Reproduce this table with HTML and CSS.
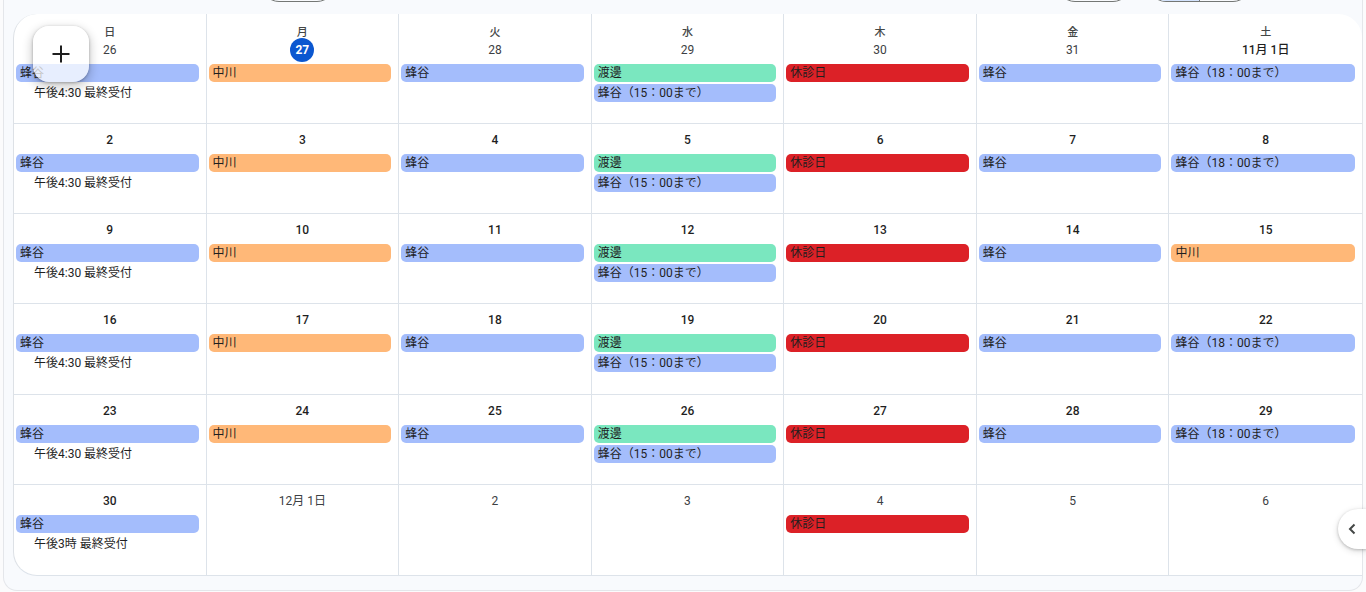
FILE: index.html
```html
<!DOCTYPE html>
<html lang="ja">
<head>
<meta charset="utf-8">
<title>カレンダー</title>
<link rel="stylesheet" href="styles.css">
</head>
<body>
<div class="frame">
  <div class="toolbar">
    <div class="tbtn tbtn-a"></div>
    <div class="spacer"></div>
    <div class="tbtn tbtn-b"></div>
    <div class="seg"><div class="seg-on"></div><div class="seg-off"></div></div>
  </div>
  <div class="card">
    <div class="grid">
      <!-- row 0 -->
      <div class="cell first"><div class="wd">日</div><div class="date other"><span class="num">26</span></div><div class="chip blue">蜂谷</div><div class="timed">午後4:30 最終受付</div></div>
      <div class="cell first"><div class="wd">月</div><div class="date other"><span class="num today">27</span></div><div class="chip orange">中川</div></div>
      <div class="cell first"><div class="wd">火</div><div class="date other"><span class="num">28</span></div><div class="chip blue">蜂谷</div></div>
      <div class="cell first"><div class="wd">水</div><div class="date other"><span class="num">29</span></div><div class="chip green">渡邊</div><div class="chip blue">蜂谷（15：00まで）</div></div>
      <div class="cell first"><div class="wd">木</div><div class="date other"><span class="num">30</span></div><div class="chip red">休診日</div></div>
      <div class="cell first"><div class="wd">金</div><div class="date other"><span class="num">31</span></div><div class="chip blue">蜂谷</div></div>
      <div class="cell first last"><div class="wd">土</div><div class="date"><span class="num">11月 1日</span></div><div class="chip blue">蜂谷（18：00まで）</div></div>
      <!-- row 1 -->
      <div class="cell"><div class="date"><span class="num">2</span></div><div class="chip blue">蜂谷</div><div class="timed">午後4:30 最終受付</div></div>
      <div class="cell"><div class="date"><span class="num">3</span></div><div class="chip orange">中川</div></div>
      <div class="cell"><div class="date"><span class="num">4</span></div><div class="chip blue">蜂谷</div></div>
      <div class="cell"><div class="date"><span class="num">5</span></div><div class="chip green">渡邊</div><div class="chip blue">蜂谷（15：00まで）</div></div>
      <div class="cell"><div class="date"><span class="num">6</span></div><div class="chip red">休診日</div></div>
      <div class="cell"><div class="date"><span class="num">7</span></div><div class="chip blue">蜂谷</div></div>
      <div class="cell last"><div class="date"><span class="num">8</span></div><div class="chip blue">蜂谷（18：00まで）</div></div>
      <!-- row 2 -->
      <div class="cell"><div class="date"><span class="num">9</span></div><div class="chip blue">蜂谷</div><div class="timed">午後4:30 最終受付</div></div>
      <div class="cell"><div class="date"><span class="num">10</span></div><div class="chip orange">中川</div></div>
      <div class="cell"><div class="date"><span class="num">11</span></div><div class="chip blue">蜂谷</div></div>
      <div class="cell"><div class="date"><span class="num">12</span></div><div class="chip green">渡邊</div><div class="chip blue">蜂谷（15：00まで）</div></div>
      <div class="cell"><div class="date"><span class="num">13</span></div><div class="chip red">休診日</div></div>
      <div class="cell"><div class="date"><span class="num">14</span></div><div class="chip blue">蜂谷</div></div>
      <div class="cell last"><div class="date"><span class="num">15</span></div><div class="chip orange">中川</div></div>
      <!-- row 3 -->
      <div class="cell"><div class="date"><span class="num">16</span></div><div class="chip blue">蜂谷</div><div class="timed">午後4:30 最終受付</div></div>
      <div class="cell"><div class="date"><span class="num">17</span></div><div class="chip orange">中川</div></div>
      <div class="cell"><div class="date"><span class="num">18</span></div><div class="chip blue">蜂谷</div></div>
      <div class="cell"><div class="date"><span class="num">19</span></div><div class="chip green">渡邊</div><div class="chip blue">蜂谷（15：00まで）</div></div>
      <div class="cell"><div class="date"><span class="num">20</span></div><div class="chip red">休診日</div></div>
      <div class="cell"><div class="date"><span class="num">21</span></div><div class="chip blue">蜂谷</div></div>
      <div class="cell last"><div class="date"><span class="num">22</span></div><div class="chip blue">蜂谷（18：00まで）</div></div>
      <!-- row 4 -->
      <div class="cell"><div class="date"><span class="num">23</span></div><div class="chip blue">蜂谷</div><div class="timed">午後4:30 最終受付</div></div>
      <div class="cell"><div class="date"><span class="num">24</span></div><div class="chip orange">中川</div></div>
      <div class="cell"><div class="date"><span class="num">25</span></div><div class="chip blue">蜂谷</div></div>
      <div class="cell"><div class="date"><span class="num">26</span></div><div class="chip green">渡邊</div><div class="chip blue">蜂谷（15：00まで）</div></div>
      <div class="cell"><div class="date"><span class="num">27</span></div><div class="chip red">休診日</div></div>
      <div class="cell"><div class="date"><span class="num">28</span></div><div class="chip blue">蜂谷</div></div>
      <div class="cell last"><div class="date"><span class="num">29</span></div><div class="chip blue">蜂谷（18：00まで）</div></div>
      <!-- row 5 -->
      <div class="cell bottom"><div class="date"><span class="num">30</span></div><div class="chip blue">蜂谷</div><div class="timed">午後3時 最終受付</div></div>
      <div class="cell bottom"><div class="date other"><span class="num">12月 1日</span></div></div>
      <div class="cell bottom"><div class="date other"><span class="num">2</span></div></div>
      <div class="cell bottom"><div class="date other"><span class="num">3</span></div></div>
      <div class="cell bottom"><div class="date other"><span class="num">4</span></div><div class="chip red">休診日</div></div>
      <div class="cell bottom"><div class="date other"><span class="num">5</span></div></div>
      <div class="cell bottom last"><div class="date other"><span class="num">6</span></div></div>
    </div>
    <button class="fab" aria-label="作成">
      <svg width="24" height="24" viewBox="0 0 24 24"><path d="M12 3.5v17M3.5 12h17" stroke="#1f1f1f" stroke-width="2" fill="none"/></svg>
    </button>
  </div>
  <button class="side-toggle" aria-label="サイドパネルを開く">
    <svg width="16" height="16" viewBox="0 0 16 16"><path d="M10.5 3.5L6 8l4.5 4.5" stroke="#444746" stroke-width="2" fill="none"/></svg>
  </button>
</div>
</body>
</html>
```

FILE: styles.css
```css
* { box-sizing: border-box; }

html, body {
  margin: 0;
  padding: 0;
  height: 100%;
  overflow: hidden;
}

body {
  background: #fbfbfc;
  font-family: "Roboto", "Noto Sans CJK JP", sans-serif;
  color: #1f1f1f;
}

.frame {
  position: relative;
  margin: 0 3px 0 3px;
  width: 1360px;
  background: #f8fafd;
  border: 1px solid #e4e6ea;
  border-top: none;
  border-radius: 0 0 14px 14px;
  padding: 0 0 14px 9px;
}

.toolbar {
  display: flex;
  align-items: flex-start;
  height: 36px;
  margin-top: -34px;
  padding-left: 248px;
  padding-right: 111px;
}

.tbtn {
  width: 74px;
  height: 36px;
  border: 1px solid #747775;
  border-radius: 18px;
}

.spacer { flex: 1; }

.tbtn-b { margin-right: 17px; }

.seg {
  display: flex;
  width: 103px;
  height: 36px;
  border: 1px solid #747775;
  border-radius: 18px;
  overflow: hidden;
}

.seg-on {
  width: 51px;
  background: #d3e3fd;
  border-right: 1px solid #747775;
}

.seg-off { flex: 1; }

.card {
  position: relative;
  margin-top: 12px;
  height: 562px;
  background: #ffffff;
  border-left: 1px solid #dde1e6;
  border-bottom: 1px solid #dde3ea;
  border-radius: 24px 24px 0 24px;
  overflow: hidden;
}

.grid {
  display: grid;
  grid-template-columns: repeat(7, 1fr);
  grid-template-rows: 110px repeat(5, 1fr);
  height: 100%;
}

.cell {
  border-right: 1px solid #dde3ea;
  border-bottom: 1px solid #dde3ea;
  padding-top: 4px;
  min-width: 0;
  overflow: hidden;
}

.cell.last { border-right: none; }
.cell.bottom { border-bottom: none; }
.cell.first { padding-top: 12px; }

.wd {
  font-size: 11px;
  font-weight: 500;
  line-height: 14px;
  text-align: center;
  color: #444746;
  margin-bottom: -2px;
}

.date {
  height: 24px;
  margin-bottom: 2px;
  display: flex;
  justify-content: center;
  align-items: center;
}

.num {
  font-size: 12px;
  font-weight: 500;
  line-height: 24px;
  color: #1f1f1f;
  padding: 0 4px;
  white-space: nowrap;
}

.date.other .num {
  font-weight: 400;
  color: #3c4043;
}

.date .num.today {
  width: 24px;
  height: 24px;
  padding: 0;
  border-radius: 50%;
  background: #0b57d0;
  color: #ffffff;
  font-weight: 700;
  text-align: center;
}

.chip {
  height: 18px;
  line-height: 18px;
  font-size: 12px;
  margin: 0 7px 2px 2px;
  padding: 0 4px;
  border-radius: 5px;
  color: #1f1f1f;
  white-space: nowrap;
  overflow: hidden;
}

.blue { background: #a4bdfc; }
.orange { background: #ffb878; }
.green { background: #7ae7bf; }
.red { background: #dc2127; }

.timed {
  height: 18px;
  line-height: 18px;
  font-size: 12px;
  margin: 0 7px 2px 2px;
  padding-left: 18px;
  color: #1f1f1f;
  white-space: nowrap;
}

.fab {
  position: absolute;
  left: 19px;
  top: 12px;
  width: 56px;
  height: 56px;
  border: none;
  border-radius: 16px;
  background: rgba(255, 255, 255, 0.74);
  box-shadow: 0 1px 3px rgba(0, 0, 0, 0.3), 0 4px 8px 3px rgba(0, 0, 0, 0.15);
  display: flex;
  align-items: center;
  justify-content: center;
  padding: 0;
}

.side-toggle {
  position: absolute;
  right: -5px;
  top: 543px;
  width: 29px;
  height: 40px;
  border: none;
  border-radius: 20px 0 0 20px;
  background: #ffffff;
  box-shadow: 0 1px 3px rgba(0, 0, 0, 0.22), 0 2px 6px 1px rgba(0, 0, 0, 0.1);
  display: flex;
  align-items: center;
  padding: 0 0 0 6px;
}
```
